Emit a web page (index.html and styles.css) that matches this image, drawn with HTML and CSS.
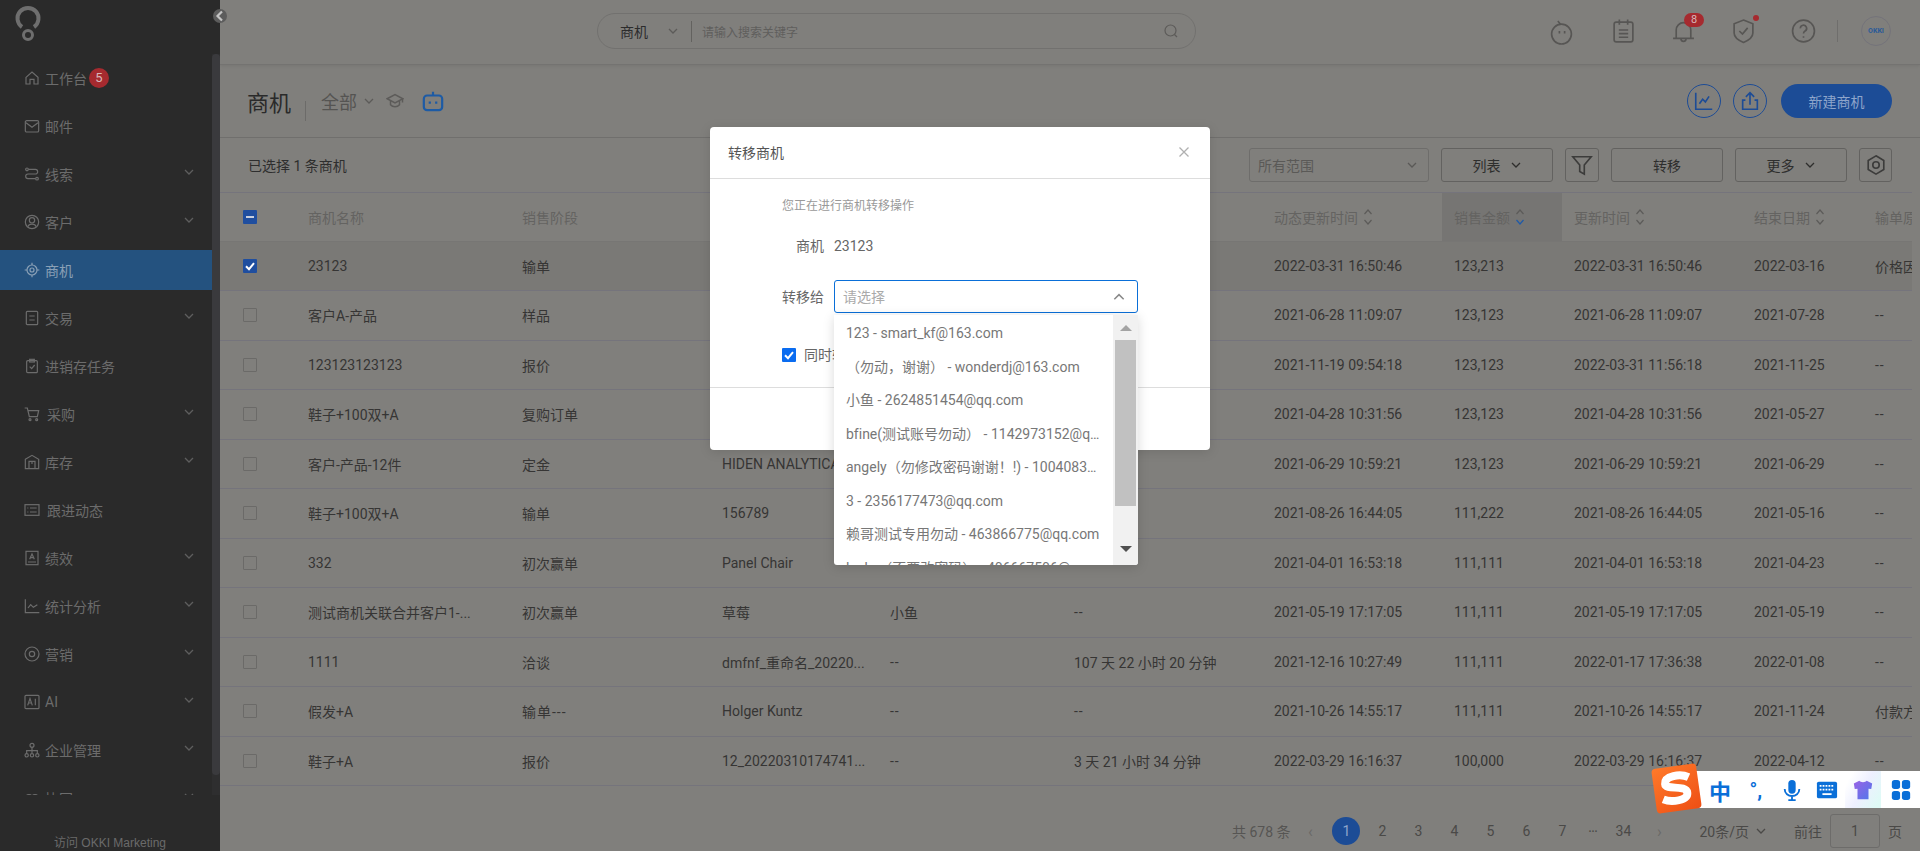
FILE: index.html
```html
<!DOCTYPE html>
<html>
  <head>
    <title>商机</title>
    <meta name="viewport" content="width=device-width, initial-scale=1" />
    <link rel="stylesheet" href="styles.css">
  </head>

  <body>
    <svg class="sprite" aria-hidden="true">
      <symbol id="chev" viewBox="0 0 12 12"><path d="M2 4l4 4 4-4" fill="none" stroke="currentColor" stroke-width="1.3"/></symbol>
      <symbol id="sort" viewBox="0 0 10 18"><path d="M1.5 6l3.5-4 3.5 4" fill="none" stroke="currentColor" stroke-width="1.2"/><path d="M1.5 12l3.5 4 3.5-4" fill="none" stroke="currentColor" stroke-width="1.2"/></symbol>
      <symbol id="sort-down" viewBox="0 0 10 18"><path d="M1.5 6l3.5-4 3.5 4" fill="none" stroke="#5c5b59" stroke-width="1.2"/><path d="M1.5 12l3.5 4 3.5-4" fill="none" stroke="#1f5aa8" stroke-width="1.2"/></symbol>
      <symbol id="tick" viewBox="0 0 14 14"><path d="M3 7.2l3 3 5-6" fill="none" stroke="#fff" stroke-width="2"/></symbol>
    </svg>

    <aside class="sidebar">
      <div class="logo">
        <svg width="30" height="42" viewBox="0 0 30 42" fill="none" stroke="currentColor">
          <path d="M9 25a10.500 10.500 0 1 1 12 0" stroke-width="4"/>
          <circle cx="15" cy="33" r="4.500" stroke-width="3"/>
        </svg>
      </div>
      <button class="collapse">
        <svg width="14" height="14" viewBox="0 0 14 14"><path d="M9 2.500L4.500 7 9 11.500" fill="none" stroke="currentColor" stroke-width="2.200"/></svg>
      </button>
      <div class="side-main">
        <nav class="menu">
          <a class="menu-item">
            <svg class="menu-icon" viewBox="0 0 24 24"><path d="M3 11l9-8 9 8v10h-6v-7H9v7H3z"/></svg>
            <span>工作台</span><b class="menu-badge">5</b>
          </a>
          <a class="menu-item">
            <svg class="menu-icon" viewBox="0 0 24 24"><rect x="2" y="4" width="20" height="17" rx="2"/><path d="M3 7l9 7 9-7"/></svg>
            <span>邮件</span>
          </a>
          <a class="menu-item">
            <svg class="menu-icon" viewBox="0 0 24 24"><circle cx="4.500" cy="5" r="2"/><circle cx="19.500" cy="19" r="2"/><path d="M7 5h10a3.500 3.500 0 0 1 0 7H6a3.500 3.500 0 0 0 0 7h11"/></svg>
            <span>线索</span><svg class="menu-arrow"><use href="#chev"/></svg>
          </a>
          <a class="menu-item">
            <svg class="menu-icon" viewBox="0 0 24 24"><circle cx="12" cy="12" r="10"/><circle cx="12" cy="9.500" r="4"/><path d="M6 19c1-5 11-5 12 0"/></svg>
            <span>客户</span><svg class="menu-arrow"><use href="#chev"/></svg>
          </a>
          <a class="menu-item active">
            <svg class="menu-icon" viewBox="0 0 24 24"><circle cx="12" cy="12" r="7.500"/><circle cx="12" cy="12" r="3"/><path d="M12 1v3.500M12 19.500V23M1 12h3.500M19.500 12H23"/></svg>
            <span>商机</span>
          </a>
          <a class="menu-item">
            <svg class="menu-icon" viewBox="0 0 24 24"><rect x="3.500" y="2" width="17" height="20" rx="1.500"/><path d="M8 9h8M8 15h8"/></svg>
            <span>交易</span><svg class="menu-arrow"><use href="#chev"/></svg>
          </a>
          <a class="menu-item">
            <svg class="menu-icon" viewBox="0 0 24 24"><rect x="4" y="4" width="16" height="18" rx="1.500"/><rect x="8.500" y="2" width="7" height="4"/><path d="M8.500 13l3 3 4.500-5.500"/></svg>
            <span>进销存任务</span>
          </a>
          <a class="menu-item">
            <svg class="menu-icon" viewBox="0 0 24 24"><path d="M1 3h4l3 13h12l2-9H6"/><circle cx="9" cy="20.500" r="1.500"/><circle cx="19" cy="20.500" r="1.500"/></svg>
            <span class="menu-text-wide">采购</span><svg class="menu-arrow"><use href="#chev"/></svg>
          </a>
          <a class="menu-item">
            <svg class="menu-icon" viewBox="0 0 24 24"><path d="M2 8l10-6 10 6v14H2z"/><path d="M7.500 22v-11h9v11M12 11v4"/></svg>
            <span>库存</span><svg class="menu-arrow"><use href="#chev"/></svg>
          </a>
          <a class="menu-item">
            <svg class="menu-icon" viewBox="0 0 24 24"><rect x="1.500" y="4" width="21" height="16"/><path d="M5 9h1.500M5 15h1.500M9 9h10M9 15h10"/></svg>
            <span class="menu-text-wide">跟进动态</span>
          </a>
          <a class="menu-item">
            <svg class="menu-icon" viewBox="0 0 24 24"><rect x="3" y="2" width="18" height="20"/><path d="M8.500 14l3.500-8 3.500 8M9.800 11.500h4.400M6 18h12"/></svg>
            <span>绩效</span><svg class="menu-arrow"><use href="#chev"/></svg>
          </a>
          <a class="menu-item">
            <svg class="menu-icon" viewBox="0 0 24 24"><path d="M2 2v20h21M6 15l4-5 4 4 6-4"/></svg>
            <span>统计分析</span><svg class="menu-arrow"><use href="#chev"/></svg>
          </a>
          <a class="menu-item">
            <svg class="menu-icon" viewBox="0 0 24 24"><circle cx="12" cy="12" r="10.500"/><circle cx="12" cy="12" r="4"/></svg>
            <span>营销</span><svg class="menu-arrow"><use href="#chev"/></svg>
          </a>
          <a class="menu-item">
            <svg class="menu-icon" viewBox="0 0 24 24"><rect x="1.500" y="2" width="21" height="20" rx="1.500"/><path d="M5.500 17l3.500-10 3.500 10M6.800 13.500h4.400M17 7v10"/></svg>
            <span>AI</span><svg class="menu-arrow"><use href="#chev"/></svg>
          </a>
          <a class="menu-item">
            <svg class="menu-icon" viewBox="0 0 24 24"><circle cx="12" cy="5" r="3"/><circle cx="4" cy="20" r="2.500"/><circle cx="12" cy="20" r="2.500"/><circle cx="20" cy="20" r="2.500"/><path d="M12 8v9M4 17.500V13h16v4.500"/></svg>
            <span>企业管理</span><svg class="menu-arrow"><use href="#chev"/></svg>
          </a>
          <a class="menu-item">
            <svg class="menu-icon" viewBox="0 0 24 24"><circle cx="7.500" cy="12" r="5"/><circle cx="16.500" cy="12" r="5"/></svg>
            <span>协同</span><svg class="menu-arrow"><use href="#chev"/></svg>
          </a>
        </nav>
        <div class="side-scroll"><div class="side-thumb"></div></div>
      </div>
      <div class="side-foot">访问 OKKI Marketing</div>
    </aside>

    <div class="content">
      <header class="topbar">
        <div class="search">
          <span class="search-type">商机</span>
          <svg class="search-arrow"><use href="#chev"/></svg>
          <span class="search-line"></span>
          <span class="search-hint">请输入搜索关键字</span>
          <svg class="search-icon" viewBox="0 0 16 16"><circle cx="7.500" cy="7.500" r="5.500"/><path d="M11.500 11.500l2.500 2.500"/></svg>
        </div>
        <div class="top-icons">
          <span class="top-icon timer">
            <svg viewBox="0 0 24 24"><circle cx="12" cy="14" r="9.500"/><path d="M11 4.500L8.500 1.500M10 11v2.500M15 11v2.500"/></svg>
          </span>
          <span class="top-icon">
            <svg viewBox="0 0 24 24"><rect x="3" y="3.500" width="18" height="19" rx="2"/><path d="M8 1v5M16 1v5M7.500 11h9M7.500 14.500h9M7.500 18h9"/></svg>
          </span>
          <span class="top-icon">
            <svg viewBox="0 0 24 24"><path d="M2 19h20M5 19v-8a7 7 0 0 1 14 0v8M9.500 19a2.500 3 0 0 0 5 0"/></svg>
            <b class="top-badge">8</b>
          </span>
          <span class="top-icon">
            <svg viewBox="0 0 24 24"><path d="M12 1.500L21 5v9c0 4-4 7-9 9-5-2-9-5-9-9V5z"/><path d="M8 12l3 3 5-6"/></svg>
            <i class="top-dot"></i>
          </span>
          <span class="top-icon">
            <svg viewBox="0 0 24 24"><circle cx="12" cy="12" r="10.500"/><path d="M9 9.500a3 3 0 1 1 4.500 2.500c-1 .6-1.500 1.200-1.500 2.500M12 17v1.500"/></svg>
          </span>
        </div>
        <span class="top-line"></span>
        <span class="avatar">OKKI</span>
      </header>

      <section class="page-head">
        <h1>商机</h1>
        <span class="head-line"></span>
        <span class="head-scope">全部</span>
        <svg class="head-arrow"><use href="#chev"/></svg>
        <svg class="head-hat" viewBox="0 0 24 24"><path d="M1.500 9L12 3.500 22.500 9 12 14.500z"/><path d="M6 12v5c3 3.500 9 3.500 12 0v-5M22 9v5"/></svg>
        <svg class="head-robot" viewBox="0 0 24 24"><rect x="2" y="6" width="20" height="16" rx="3.500"/><path d="M12 6V2M8.500 12.500v2.500M15.500 12.500v2.500"/></svg>
        <div class="head-actions">
          <button class="round-btn">
            <svg viewBox="0 0 24 24"><path d="M3 3v18h18M7 15l3.500-5 3 3 4-6"/></svg>
          </button>
          <button class="round-btn">
            <svg viewBox="0 0 24 24"><path d="M12 16V3M7.500 7.500L12 3l4.500 4.500M7 11H4v10h16V11h-3"/></svg>
          </button>
          <button class="new-btn">新建商机</button>
        </div>
      </section>

      <section class="toolbar">
        <span class="picked">已选择 1 条商机</span>
        <div class="tools">
          <div class="range">所有范围<svg><use href="#chev"/></svg></div>
          <button class="tool-btn">列表<svg><use href="#chev"/></svg></button>
          <button class="tool-btn square">
            <svg viewBox="0 0 24 24"><path d="M2 3h20l-7.500 9v10l-5-3v-7z"/></svg>
          </button>
          <button class="tool-btn">转移</button>
          <button class="tool-btn">更多<svg><use href="#chev"/></svg></button>
          <button class="tool-btn square gear">
            <svg viewBox="0 0 24 24"><path d="M12 2l8.500 5v10L12 22l-8.500-5V7z"/><circle cx="12" cy="12" r="3.500"/></svg>
          </button>
        </div>
      </section>

      <div class="table">
        <div class="row head">
          <span><i class="check on"><em></em></i></span>
          <span>商机名称</span>
          <span>销售阶段</span>
          <span>公司名称</span>
          <span>联系人</span>
          <span>停留时长</span>
          <span>动态更新时间<svg class="sort"><use href="#sort"/></svg></span>
          <span class="sorted">销售金额<svg class="sort"><use href="#sort-down"/></svg></span>
          <span>更新时间<svg class="sort"><use href="#sort"/></svg></span>
          <span>结束日期<svg class="sort"><use href="#sort"/></svg></span>
          <span>输单原因</span>
        </div>
        <div class="row picked-row">
          <span><i class="check on"><svg><use href="#tick"/></svg></i></span>
          <span>23123</span><span>输单</span><span class="nil">--</span><span class="nil">--</span><span class="nil">--</span>
          <span>2022-03-31 16:50:46</span><span>123,213</span><span>2022-03-31 16:50:46</span><span>2022-03-16</span><span>价格因素</span>
        </div>
        <div class="row">
          <span><i class="check"></i></span>
          <span>客户A-产品</span><span>样品</span><span class="nil">--</span><span class="nil">--</span><span class="nil">--</span>
          <span>2021-06-28 11:09:07</span><span>123,123</span><span>2021-06-28 11:09:07</span><span>2021-07-28</span><span class="nil">--</span>
        </div>
        <div class="row">
          <span><i class="check"></i></span>
          <span>123123123123</span><span>报价</span><span class="nil">--</span><span class="nil">--</span><span class="nil">--</span>
          <span>2021-11-19 09:54:18</span><span>123,123</span><span>2022-03-31 11:56:18</span><span>2021-11-25</span><span class="nil">--</span>
        </div>
        <div class="row">
          <span><i class="check"></i></span>
          <span>鞋子+100双+A</span><span>复购订单</span><span class="nil">--</span><span class="nil">--</span><span class="nil">--</span>
          <span>2021-04-28 10:31:56</span><span>123,123</span><span>2021-04-28 10:31:56</span><span>2021-05-27</span><span class="nil">--</span>
        </div>
        <div class="row">
          <span><i class="check"></i></span>
          <span>客户-产品-12件</span><span>定金</span><span>HIDEN ANALYTICAL</span><span class="nil">--</span><span class="nil">--</span>
          <span>2021-06-29 10:59:21</span><span>123,123</span><span>2021-06-29 10:59:21</span><span>2021-06-29</span><span class="nil">--</span>
        </div>
        <div class="row">
          <span><i class="check"></i></span>
          <span>鞋子+100双+A</span><span>输单</span><span>156789</span><span class="nil">--</span><span class="nil">--</span>
          <span>2021-08-26 16:44:05</span><span>111,222</span><span>2021-08-26 16:44:05</span><span>2021-05-16</span><span class="nil">--</span>
        </div>
        <div class="row">
          <span><i class="check"></i></span>
          <span>332</span><span>初次赢单</span><span>Panel Chair</span><span class="nil">--</span><span class="nil">--</span>
          <span>2021-04-01 16:53:18</span><span>111,111</span><span>2021-04-01 16:53:18</span><span>2021-04-23</span><span class="nil">--</span>
        </div>
        <div class="row">
          <span><i class="check"></i></span>
          <span>测试商机关联合并客户1-...</span><span>初次赢单</span><span>草莓</span><span>小鱼</span><span class="nil">--</span>
          <span>2021-05-19 17:17:05</span><span>111,111</span><span>2021-05-19 17:17:05</span><span>2021-05-19</span><span class="nil">--</span>
        </div>
        <div class="row">
          <span><i class="check"></i></span>
          <span>1111</span><span>洽谈</span><span>dmfnf_重命名_20220...</span><span class="nil">--</span><span>107 天 22 小时 20 分钟</span>
          <span>2021-12-16 10:27:49</span><span>111,111</span><span>2022-01-17 17:36:38</span><span>2022-01-08</span><span class="nil">--</span>
        </div>
        <div class="row">
          <span><i class="check"></i></span>
          <span>假发+A</span><span class="nil">输单---</span><span>Holger Kuntz</span><span class="nil">--</span><span class="nil">--</span>
          <span>2021-10-26 14:55:17</span><span>111,111</span><span>2021-10-26 14:55:17</span><span>2021-11-24</span><span>付款方式</span>
        </div>
        <div class="row">
          <span><i class="check"></i></span>
          <span>鞋子+A</span><span>报价</span><span>12_20220310174741...</span><span class="nil">--</span><span>3 天 21 小时 34 分钟</span>
          <span>2022-03-29 16:16:37</span><span>100,000</span><span>2022-03-29 16:16:37</span><span>2022-04-12</span><span class="nil">--</span>
        </div>
      </div>

      <footer class="pager">
        <span class="pager-total">共 678 条</span>
        <span class="pager-arrow">‹</span>
        <span class="pager-num current">1</span>
        <span class="pager-num">2</span>
        <span class="pager-num">3</span>
        <span class="pager-num">4</span>
        <span class="pager-num">5</span>
        <span class="pager-num">6</span>
        <span class="pager-num">7</span>
        <span class="pager-dots">···</span>
        <span class="pager-num">34</span>
        <span class="pager-arrow">›</span>
        <span class="pager-size">20条/页<svg><use href="#chev"/></svg></span>
        <span class="pager-go">前往</span>
        <span class="pager-input">1</span>
        <span class="pager-unit">页</span>
      </footer>
    </div>

    <div class="dialog">
      <div class="dialog-head">
        <span>转移商机</span>
        <svg class="dialog-close" viewBox="0 0 12 12"><path d="M1.500 1.500l9 9M10.500 1.500l-9 9"/></svg>
      </div>
      <div class="dialog-body">
        <p class="dialog-tip">您正在进行商机转移操作</p>
        <div class="field">
          <label>商机</label>
          <span>23123</span>
        </div>
        <div class="field field-select">
          <label>转移给</label>
          <div class="select">
            <span>请选择</span>
            <svg><use href="#chev"/></svg>
          </div>
        </div>
        <div class="also">
          <i class="also-check"><svg><use href="#tick"/></svg></i>
          <span>同时转移客户</span>
        </div>
      </div>
      <div class="dialog-foot">
        <button>取消</button>
        <button>确定</button>
      </div>
    </div>

    <div class="dropdown">
      <ul class="options">
        <li>123 - smart_kf@163.com</li>
        <li>（勿动，谢谢） - wonderdj@163.com</li>
        <li>小鱼 - 2624851454@qq.com</li>
        <li>bfine(测试账号勿动） - 1142973152@qq.com</li>
        <li>angely（勿修改密码谢谢！!) - 1004083126@qq.com</li>
        <li>3 - 2356177473@qq.com</li>
        <li>赖哥测试专用勿动 - 463866775@qq.com</li>
        <li>lucky（不要改密码） - 406667506@qq.com</li>
      </ul>
      <div class="scroll">
        <i class="scroll-up"></i>
        <div class="scroll-thumb"></div>
        <i class="scroll-down"></i>
      </div>
    </div>

    <div class="ime">
      <div class="ime-logo">
        <svg viewBox="0 0 40 40"><path d="M32 11.500C25 7 11 7.500 10.500 14.500 10 20.500 29 17.500 29 25c0 7-15 7-22 3" fill="none" stroke="#fff" stroke-width="7"/></svg>
      </div>
      <span class="ime-item ime-zh">中</span>
      <span class="ime-item ime-punct">°,</span>
      <span class="ime-item">
        <svg viewBox="0 0 24 24"><rect x="8" y="1" width="8" height="15" rx="4" fill="#0a6fd8"/><path d="M4 11c0 10 16 10 16 0M12 19v4M8 23h8" fill="none" stroke="#0a6fd8" stroke-width="2"/></svg>
      </span>
      <span class="ime-item">
        <svg viewBox="0 0 24 24"><rect x="1" y="3" width="22" height="18" rx="2" fill="#0a6fd8"/><path d="M4 7.500h16M4 11.500h16" stroke="#fff" stroke-width="2" stroke-dasharray="2 1.200"/><path d="M7 16.500h10" stroke="#fff" stroke-width="2"/></svg>
      </span>
      <span class="ime-item ime-skin">
        <svg viewBox="0 0 24 24">
          <linearGradient id="shirt" x1="0" y1="0" x2="1" y2="1"><stop offset="0" stop-color="#9a62e6"/><stop offset="1" stop-color="#4f78ea"/></linearGradient>
          <path d="M8 2L2 5l1 6 3-.5V22h12V10.500l3 .5 1-6-6-3c-1 2-7 2-8 0z" fill="url(#shirt)"/>
        </svg>
      </span>
      <span class="ime-item ime-apps">
        <svg viewBox="0 0 24 24" fill="#0a6fd8"><rect x="2" y="1" width="9" height="10" rx="3"/><rect x="13" y="1" width="9" height="10" rx="3"/><rect x="2" y="13" width="9" height="10" rx="3"/><rect x="13" y="13" width="9" height="10" rx="3"/></svg>
      </span>
    </div>
  </body>
</html>
```

FILE: styles.css
```css
* {
  box-sizing: border-box;
}

/* the page sits behind a modal, colours below are the dimmed ones */
body {
  margin: 0;
  height: 100vh;
  display: flex;
  overflow: hidden;
  background: #807f7c;
  color: #363534;
  font-family: Roboto, "Noto Sans CJK SC", sans-serif;
  font-size: 14px;
  font-variant-ligatures: none;
}

button {
  font: inherit;
  color: inherit;
  background: none;
  padding: 0;
}

.sprite {
  display: none;
}

/* sidebar */

.sidebar {
  width: 220px;
  flex-shrink: 0;
  position: relative;
  display: flex;
  flex-direction: column;
  background: #2a2a2a;
  color: #6c6c6c;
}

.logo {
  height: 54px;
  padding: 2px 0 0 13px;
  color: #6e6e6e;
}

.collapse {
  position: absolute;
  top: 9px;
  right: -7px;
  width: 14px;
  height: 14px;
  display: flex;
  border: 0;
  border-radius: 50%;
  background: #5c5c5c;
  color: #c4c4c4;
}

.side-main {
  height: 744px;
  display: flex;
  overflow: hidden;
}

.menu {
  flex: 1;
  padding-top: 4px;
  display: flex;
  flex-direction: column;
  gap: 8px;
}

.menu-item {
  height: 40px;
  flex-shrink: 0;
  padding: 0 17px 0 24px;
  display: flex;
  align-items: center;
}

.menu-item.active {
  background: #24527f;
  color: #8aa0b6;
}

.menu-icon {
  width: 16px;
  height: 16px;
  margin-right: 5px;
  fill: none;
  stroke: currentColor;
  stroke-width: 1.800;
}

.menu-text-wide {
  margin-left: 2px;
}

.menu-badge {
  width: 20px;
  height: 20px;
  margin-left: 2px;
  border-radius: 50%;
  background: #a62a2f;
  color: #d8b8ba;
  font-size: 13px;
  font-weight: 400;
  line-height: 20px;
  text-align: center;
}

.menu-arrow {
  width: 12px;
  height: 12px;
  margin: -4px 0 0 auto;
  color: #5e5e5e;
}

.side-scroll {
  width: 8px;
  background: #2e2e2f;
}

.side-thumb {
  height: 721px;
  border-radius: 4px;
  background: #3a3a3d;
}

.side-foot {
  flex: 1;
  padding-top: 40px;
  color: #6a6a6a;
  font-family: "Liberation Sans", "Noto Sans CJK SC", sans-serif;
  font-size: 12px;
  line-height: 16px;
  text-align: center;
  white-space: nowrap;
}

/* main column */

.content {
  flex: 1;
  min-width: 0;
  display: flex;
  flex-direction: column;
}

.topbar {
  height: 65px;
  flex-shrink: 0;
  padding: 0 29px 2px 377px;
  display: flex;
  align-items: center;
  border-bottom: 1px solid #747371;
  box-shadow: 0 1px 3px rgba(0, 0, 0, 0.08);
}

.search {
  width: 599px;
  height: 36px;
  padding: 0 16px 0 22px;
  display: flex;
  align-items: center;
  border: 1px solid #72716f;
  border-radius: 18px;
}

.search-type {
  color: #2c2c2c;
}

.search-arrow {
  width: 12px;
  height: 12px;
  margin-left: 19px;
  color: #5c5b59;
}

.search-line {
  width: 1px;
  height: 21px;
  margin: 0 10px 0 12px;
  background: #63625f;
}

.search-hint {
  flex: 1;
  color: #5f5e5c;
  font-size: 12px;
}

.search-icon {
  width: 16px;
  height: 16px;
  fill: none;
  stroke: #5c5b59;
  stroke-width: 1.200;
}

.top-icons {
  margin-left: auto;
  display: flex;
}

.top-icon {
  width: 60px;
  height: 26px;
  position: relative;
  display: flex;
  justify-content: center;
}

.top-icon svg {
  width: 25px;
  height: 26px;
  fill: none;
  stroke: #575654;
  stroke-width: 1.600;
}

.top-icon.timer svg {
  margin: 1px 3px 0 0;
}

.top-badge {
  position: absolute;
  top: -5px;
  left: 31px;
  width: 20px;
  height: 14px;
  border-radius: 7px;
  background: #a62a2f;
  color: #d8b8ba;
  font-size: 11px;
  font-weight: 400;
  line-height: 14px;
  text-align: center;
}

.top-dot {
  position: absolute;
  top: -3px;
  left: 40px;
  width: 6px;
  height: 6px;
  border-radius: 50%;
  background: #a62a2f;
}

.top-line {
  width: 1px;
  height: 22px;
  margin: 0 23px 0 4px;
  background: #6f6e6c;
}

.avatar {
  width: 30px;
  height: 30px;
  border: 1px solid #74737a;
  border-radius: 50%;
  color: #2a5a98;
  font-size: 7px;
  font-weight: 700;
  line-height: 28px;
  text-align: center;
}

.page-head {
  height: 73px;
  flex-shrink: 0;
  padding: 0 28px 0 27px;
  display: flex;
  align-items: center;
  border-bottom: 1px solid #706f6d;
}

.page-head h1 {
  margin: 0;
  color: #2a2a2a;
  font-size: 22px;
  font-weight: 400;
}

.head-line {
  width: 1px;
  height: 20px;
  margin: 20px 15px 0 14px;
  background: #6c6b69;
}

.head-scope {
  color: #555452;
  font-size: 18px;
}

.head-arrow {
  width: 12px;
  height: 12px;
  margin-left: 6px;
  color: #5c5b59;
}

.head-hat {
  width: 18px;
  height: 18px;
  margin-left: 11px;
  fill: none;
  stroke: #5c5b59;
  stroke-width: 2;
}

.head-robot {
  width: 22px;
  height: 22px;
  margin-left: 18px;
  fill: none;
  stroke: #1d5ba5;
  stroke-width: 2.400;
}

.head-actions {
  margin-left: auto;
  display: flex;
  gap: 12px;
}

.round-btn {
  width: 34px;
  height: 34px;
  padding: 5px;
  border: 1px solid #1d4c96;
  border-radius: 50%;
}

.round-btn svg {
  display: block;
  fill: none;
  stroke: #1d4c96;
  stroke-width: 1.800;
}

.new-btn {
  width: 111px;
  height: 34px;
  margin-left: 2px;
  border: 0;
  border-radius: 17px;
  background: #1c4c96;
  color: #8ea5cb;
}

.toolbar {
  height: 54px;
  flex-shrink: 0;
  padding: 0 28px;
  display: flex;
  align-items: center;
  justify-content: space-between;
}

.picked {
  color: #2e2e2e;
}

.tools {
  display: flex;
  gap: 12px;
}

.range {
  width: 180px;
  height: 34px;
  padding: 0 8px;
  display: flex;
  align-items: center;
  justify-content: space-between;
  border: 1px solid #6e6d6b;
  border-radius: 3px;
  color: #5a5957;
}

.range svg {
  width: 12px;
  height: 12px;
  margin-right: 2px;
}

.tool-btn {
  width: 112px;
  height: 34px;
  display: flex;
  align-items: center;
  justify-content: center;
  gap: 9px;
  border: 1px solid #636260;
  border-radius: 3px;
  color: #2e2e2d;
}

.tool-btn svg {
  width: 12px;
  height: 12px;
}

.tool-btn.square {
  width: 34px;
}

.tool-btn.square.gear {
  width: 33px;
}

.tool-btn.square svg {
  width: 22px;
  height: 22px;
  fill: none;
  stroke: #3c3c3b;
  stroke-width: 1.800;
}

/* table rows share one set of columns */

.table {
  width: 1692px;
  overflow: hidden;
  border-top: 1px solid #75747c;
}

.row {
  height: 49.500px;
  display: grid;
  grid-template-columns: 76px 214px 200px 168px 184px 200px 180px 120px 180px 121px 49px;
  align-items: stretch;
  border-bottom: 1px solid #75747c;
}

.row > span {
  padding-left: 12px;
  display: flex;
  align-items: center;
  overflow: hidden;
  white-space: nowrap;
}

.row > span:first-child {
  padding-left: 23px;
}

.row > .nil {
  letter-spacing: 1px;
}

.row.head {
  height: 48.500px;
  color: #646361;
  border-bottom-color: #777674;
}

.row.head .sorted {
  background: #767573;
}

.picked-row {
  background: #7a7976;
}

.sort {
  width: 10px;
  height: 18px;
  margin-left: 5px;
  flex-shrink: 0;
  color: #5c5b59;
}

.check {
  width: 14px;
  height: 14px;
  display: flex;
  align-items: center;
  justify-content: center;
  border: 1px solid #6b6a68;
  border-radius: 1px;
}

.check.on {
  border: 0;
  background: #1f4e9f;
}

.check svg {
  width: 14px;
  height: 14px;
}

.check em {
  width: 8px;
  height: 2px;
  background: #c8cfdd;
}

.pager {
  margin-top: auto;
  height: 40px;
  padding-right: 18px;
  display: flex;
  align-items: center;
  justify-content: flex-end;
  color: #4a4947;
}

.pager-arrow {
  width: 36px;
  color: #6a6967;
  font-size: 16px;
  text-align: center;
}

.pager-num {
  width: 36px;
  text-align: center;
}

.pager-num.current {
  width: 28px;
  height: 28px;
  margin: 0 4px;
  border-radius: 50%;
  background: #1c4c96;
  color: #8ea5cb;
  line-height: 28px;
}

.pager-dots {
  width: 25px;
  font-size: 10px;
  font-weight: 700;
  text-align: center;
}

.pager-total {
  margin-right: 2px;
  color: #565553;
}

.pager-size {
  margin-left: 22px;
  display: flex;
  align-items: center;
  gap: 6px;
}

.pager-size svg {
  width: 12px;
  height: 12px;
}

.pager-go {
  margin-left: 27px;
}

.pager-input {
  width: 50px;
  height: 34px;
  margin: 0 8px;
  border: 1px solid #6d6c6a;
  border-radius: 3px;
  line-height: 32px;
  text-align: center;
}

/* modal */

.dialog {
  position: absolute;
  top: 127px;
  left: 710px;
  width: 500px;
  height: 323px;
  display: flex;
  flex-direction: column;
  border-radius: 4px;
  background: #fff;
  color: #666;
  box-shadow: 0 2px 12px rgba(0, 0, 0, 0.12);
}

.dialog-head {
  height: 52px;
  padding: 0 18px 2px;
  display: flex;
  align-items: center;
  justify-content: space-between;
  border-bottom: 1px solid #ddd;
  color: #555;
}

.dialog-close {
  width: 12px;
  height: 12px;
  margin-right: 2px;
  fill: none;
  stroke: #b0b0b0;
  stroke-width: 1.300;
}

.dialog-body {
  height: 209px;
  padding: 18px 0 0 72px;
  border-bottom: 1px solid #ddd;
}

.dialog-tip {
  margin: 0;
  color: #999;
  font-size: 12px;
  line-height: 18px;
}

.field {
  margin-top: 21px;
  display: flex;
  align-items: center;
  gap: 10px;
  line-height: 20px;
}

.field label {
  width: 42px;
  text-align: right;
}

.field-select {
  margin-top: 24px;
}

.select {
  width: 304px;
  height: 33px;
  padding: 0 11px 0 8px;
  display: flex;
  align-items: center;
  justify-content: space-between;
  border: 1px solid #0a6fd8;
  border-radius: 3px;
  color: #aaa;
}

.select svg {
  width: 14px;
  height: 14px;
  transform: rotate(180deg);
  color: #888;
}

.also {
  margin-top: 32px;
  display: flex;
  align-items: center;
  gap: 8px;
  line-height: 20px;
}

.also-check {
  width: 14px;
  height: 14px;
  border-radius: 1px;
  background: #0a6cf0;
}

.also-check svg {
  display: block;
  width: 14px;
  height: 14px;
}

.dialog-foot {
  flex: 1;
  display: flex;
  align-items: center;
  justify-content: center;
  gap: 12px;
}

.dialog-foot button {
  width: 72px;
  height: 32px;
  border: 1px solid #ddd;
  border-radius: 16px;
}

.dropdown {
  position: absolute;
  top: 315px;
  left: 834px;
  width: 304px;
  height: 250px;
  display: flex;
  overflow: hidden;
  background: #fff;
  box-shadow: 0 2px 12px rgba(0, 0, 0, 0.15);
  border-radius: 0 0 3px 3px;
}

.options {
  flex: 1;
  min-width: 0;
  margin: 0;
  padding: 2px 0 0;
  list-style: none;
  color: #777;
}

.options li {
  height: 33.500px;
  padding: 0 12px;
  overflow: hidden;
  line-height: 33.500px;
  white-space: nowrap;
  text-overflow: ellipsis;
}

.scroll {
  width: 25px;
  padding: 0 2px;
  display: flex;
  flex-direction: column;
  align-items: center;
  background: #f1f1f1;
}

.scroll-up,
.scroll-down {
  width: 0;
  height: 0;
  margin-top: 10px;
  border-left: 6px solid transparent;
  border-right: 6px solid transparent;
  border-bottom: 6px solid #a3a3a3;
}

.scroll-down {
  margin-top: 40px;
  border-bottom: 0;
  border-top: 6px solid #505050;
}

.scroll-thumb {
  width: 21px;
  height: 166px;
  margin-top: 9px;
  background: #c1c1c1;
}

/* input method bar */

.ime {
  position: absolute;
  top: 771px;
  right: 0;
  width: 261px;
  height: 37px;
  padding-left: 43px;
  display: flex;
  background: #fff;
}

.ime-logo {
  position: absolute;
  top: -5px;
  left: -5px;
  width: 45px;
  height: 45px;
  border-radius: 4px;
  background: linear-gradient(150deg, #ff7a2a, #ee4f14);
  transform: rotate(-8deg);
}

.ime-logo svg {
  display: block;
}

.ime-item {
  width: 36px;
  display: flex;
  align-items: center;
  justify-content: center;
  color: #0a6fd8;
}

.ime-item svg {
  width: 22px;
  height: 22px;
}

.ime-zh {
  font-size: 22px;
  font-weight: 700;
}

.ime-punct {
  font-size: 20px;
  font-weight: 700;
}

.ime-skin {
  background: linear-gradient(120deg, #fff 15%, #eef0ff 50%, #dffaf6 90%);
}

.ime-apps {
  margin-left: 1px;
  width: 38px;
}
```
